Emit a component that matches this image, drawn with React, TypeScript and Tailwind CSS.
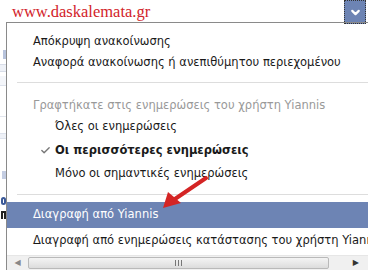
import { ChevronDown, Check } from "lucide-react";

const font = "font-['Tahoma','DejaVu_Sans',sans-serif]";

const Separator = ({ className }: { className: string }) => (
  <div className={`ml-[10px] mr-[8px] h-px bg-[#dddddd] ${className}`} />
);

const App = () => {
  return (
    <div className={`relative w-[368px] h-[270px] overflow-hidden bg-white ${font} text-[11.5px] text-[#1a1a1a]`}>
      {/* Top bar */}
      <div className="flex h-[23px]">
        <div className="flex-1 pl-[12px] pt-[3px] font-['Liberation_Serif',serif] text-[16.5px] leading-[18px] text-[#d2232a]">
          www.daskalemata.gr
        </div>
        <div className="mr-[2px] w-[22px] h-[24px] bg-[#6d84b4] border border-dotted border-[#333] flex items-center justify-center">
          <ChevronDown className="w-[13px] h-[13px] text-white" strokeWidth={4} />
        </div>
      </div>

      <div className="flex h-[247px]">
        {/* Page fragments behind the menu */}
        <div className="w-[6px] flex flex-col">
          <div className="h-[27px]" />
          <div className="ml-[3px] w-[3px] h-[9px] bg-[#b7c3dc]" />
          <div className="mt-[5px] h-[8px] bg-[#eef1f7] border-y border-[#d8dde8]" />
          <div className="mt-[4px] h-[10px] bg-[#f4f6fa] border-b border-[#dde2ec]" />
          <div className="mt-[30px] h-px bg-[#e2e6ee]" />
          <div className="mt-[16px] h-[6px] bg-[#eef1f7] border-y border-[#dde2ec]" />
          <div className="mt-[32px] ml-[2px] w-[4px] h-[8px] bg-[#c4cde2]" />
          <div className="mt-[18px] ml-[1px] w-[5px] h-[8px] border-2 border-[#3b5998] rounded-full" />
          <div className="mt-[6px] ml-[1px] w-[5px] h-[8px] border-x-2 border-t-2 border-[#222]" />
        </div>

        {/* Dropdown menu */}
        <div className="flex-1 mr-px flex flex-col border-t border-x border-[#8a8a8a] -mt-px">
          <div className="h-[8px]" />
          <div className="h-[21px] pl-[26px] flex items-center">Απόκρυψη ανακοίνωσης</div>
          <div className="h-[21px] pl-[26px] flex items-center">
            Αναφορά ανακοίνωσης ή ανεπιθύμητου περιεχομένου
          </div>
          <Separator className="mt-[9px] mb-[12px]" />
          <div className="h-[21px] pl-[26px] flex items-center text-[#999999]">
            Γραφτήκατε στις ενημερώσεις του χρήστη Yiannis
          </div>
          <div className="h-[22px] pl-[48px] flex items-center">Όλες οι ενημερώσεις</div>
          <div className="h-[25px] pl-[33px] flex items-center gap-[4px] font-bold">
            <Check className="w-[11px] h-[11px] text-[#777]" strokeWidth={3} />
            Οι περισσότερες ενημερώσεις
          </div>
          <div className="h-[22px] pl-[48px] flex items-center">Μόνο οι σημαντικές ενημερώσεις</div>
          <Separator className="mt-[9px] mb-[7px]" />
          <div className="h-[26px] pl-[26px] flex items-center bg-[#6d84b4] text-white">
            Διαγραφή από Yiannis
          </div>
          <div className="h-[26px] pl-[26px] flex items-center whitespace-nowrap overflow-hidden">
            Διαγραφή από ενημερώσεις κατάστασης του χρήστη Yiannis
          </div>

          {/* Horizontal scrollbar */}
          <div className="mt-auto h-[15px] flex bg-[#f0f0f0] border-t border-[#e6e6e6]">
            <div className="w-[21px] flex items-center justify-center text-[8px] text-[#888]">◀</div>
            <div className="w-[301px] my-px bg-gradient-to-b from-[#f4f4f4] to-[#dcdcdc] border border-[#b9b9b9] rounded-[2px] flex items-center justify-center">
              <div className="flex gap-[2px]">
                <div className="w-px h-[6px] bg-[#777]" />
                <div className="w-px h-[6px] bg-[#777]" />
                <div className="w-px h-[6px] bg-[#777]" />
              </div>
            </div>
            <div className="flex-1 flex items-center justify-center text-[8px] text-[#333]">▶</div>
          </div>
        </div>
      </div>

      {/* Red annotation arrow */}
      <svg className="absolute left-0 top-0 pointer-events-none" width="368" height="270">
        <line x1="206" y1="178" x2="172" y2="201" stroke="#d42424" strokeWidth="4" strokeLinecap="round" />
        <polygon points="163,208 168,192 181,203" fill="#d42424" />
      </svg>
    </div>
  );
};

export default App;
